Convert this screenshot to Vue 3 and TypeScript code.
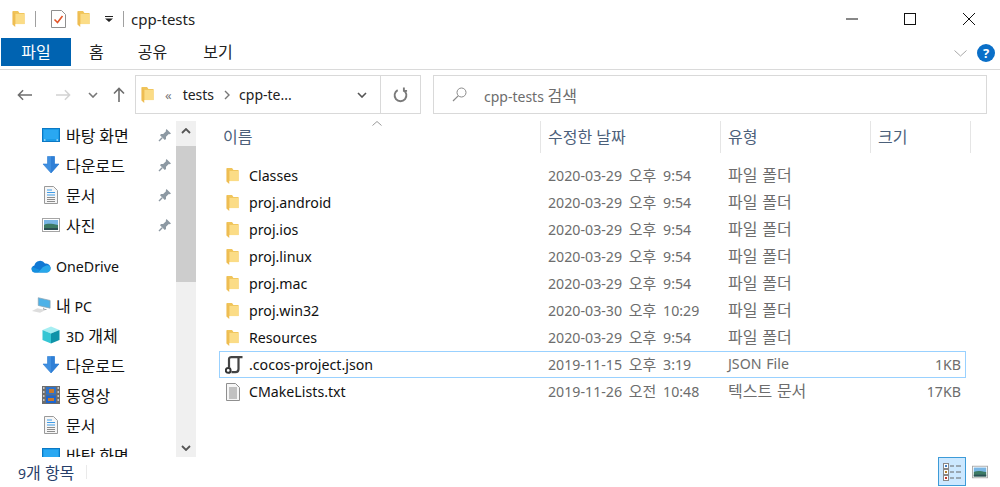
<template>
  <div class="explorer">
    <!-- hidden icon sheet -->
    <svg class="icon-defs" aria-hidden="true">
      <symbol id="i-folder" viewBox="0 0 14 18">
        <path d="M1 0.5h5.5L8 2.5h5.5V14.5H1z" fill="#f0c45a" />
        <path d="M3.5 3.5h10v11h-10z" fill="#fbdc86" />
        <path d="M0.5 0.5 3.5 3.5V17.5L0.5 15z" fill="#eebd52" />
      </symbol>
      <symbol id="i-desktop" viewBox="0 0 18 14">
        <rect x="0.5" y="0.5" width="17" height="13" fill="#1b9ce8" stroke="#0b78c4" />
        <path d="M2 2h14v9H2z" fill="#2aa8f2" />
        <path d="M2 12h1.5M14.5 12H16" stroke="#fff" />
      </symbol>
      <symbol id="i-download" viewBox="0 0 18 18">
        <path d="M5.5 0.5h7v7.5H17L9 17 1 8h4.5z" fill="#3f8fe0" stroke="#2a7bd0" stroke-width="0.6" />
        <path d="M9 0.5h3.5V8H17L9 17z" fill="#2f7fd6" />
      </symbol>
      <symbol id="i-doc" viewBox="0 0 14 18">
        <path d="M0.5 0.5h9l4 4v13H0.5z" fill="#f6f6f6" stroke="#9a9a9a" />
        <path d="M3 4h5M3 6.5h8M3 9h8" stroke="#3f9be6" />
        <path d="M3 11.5h8M3 13.5h8M3 15.5h8" stroke="#8c8c8c" />
      </symbol>
      <symbol id="i-photo" viewBox="0 0 18 14">
        <rect x="0.5" y="0.5" width="17" height="13" fill="#fff" stroke="#a5a5a5" />
        <rect x="2" y="2" width="14" height="5" fill="#79b6e4" />
        <path d="M2 7c4-2 8-1 14 0v5H2z" fill="#3d7a64" />
        <path d="M2 10h14v2H2z" fill="#2c4f54" />
      </symbol>
      <symbol id="i-pin" viewBox="0 0 14 14">
        <path d="M8.5 1 13 5.5 11.8 6.2 10.8 6 8 8.8 8 11 6.8 12 2 7.2 3 6h2.2L8 3.2 7.8 2.2z" fill="#8d99a3" />
        <path d="M4.2 9.8 1 13" stroke="#8d99a3" stroke-width="1.4" />
      </symbol>
      <symbol id="i-cloud" viewBox="0 0 20 14">
        <path d="M4 13.5a3.6 3.6 0 0 1-.6-7.1A5.8 5.8 0 0 1 14 4.6a4.4 4.4 0 0 1 2 8.9z" fill="#0f78d4" />
        <path d="M7 13.5 12 8l4-1.8a3.7 3.7 0 0 1 3.6 3.6c0 2-1.6 3.7-3.6 3.7z" fill="#28a8ea" />
        <path d="M4 13.5a3.6 3.6 0 0 1-2.8-5.6L9 11l-2 2.5z" fill="#1490df" />
      </symbol>
      <symbol id="i-pc" viewBox="0 0 22 18">
        <path d="M8 1 21 4v8.5L8 9.5z" fill="#4db2e8" stroke="#8ba2b2" stroke-width="0.8" />
        <path d="M14 12v2h3" stroke="#9aa6ae" stroke-width="1.2" fill="none" />
        <path d="M1 15.5 7 12.5l9 2-6 3z" fill="#dddddd" />
      </symbol>
      <symbol id="i-cube" viewBox="0 0 18 18">
        <path d="M9 0.5 17.5 4 9 7.5.5 4z" fill="#a6eef2" />
        <path d="M.5 4 9 7.5v10L.5 14z" fill="#35c6d4" />
        <path d="M17.5 4 9 7.5v10l8.5-3.5z" fill="#0f93a8" />
      </symbol>
      <symbol id="i-film" viewBox="0 0 18 18">
        <rect width="18" height="18" fill="#6d6d6d" />
        <path d="M1 2h1.5M1 6h1.5M1 10h1.5M1 14h1.5M15.5 2H17M15.5 6H17M15.5 10H17M15.5 14H17" stroke="#e4e4e4" stroke-width="1.4" />
        <rect x="4" y="1" width="10" height="7.5" fill="#2f72c8" />
        <rect x="4" y="9.5" width="10" height="7.5" fill="#1d66d0" />
        <path d="M7 3h5v4H7zM6 12h6v3H6z" fill="#c8792c" />
      </symbol>
      <symbol id="i-scroll" viewBox="0 0 18 18">
        <path d="M4 11.5V3.2C4 1.6 5 1.1 6.4 1.1H17.5" fill="none" stroke="#444" stroke-width="2.2" />
        <path d="M13.5 1v12c0 2.2-1.2 3.2-3 3.2H6.5" fill="none" stroke="#444" stroke-width="2.2" />
        <circle cx="3.2" cy="14.4" r="2.4" fill="#fff" stroke="#333" stroke-width="2" />
      </symbol>
      <symbol id="i-text" viewBox="0 0 14 18">
        <path d="M0.5 0.5h9l4 4v13H0.5z" fill="#f6f6f6" stroke="#8f8f8f" />
        <path d="M3 5h8M3 7h8M3 9h8M3 11h8M3 13h8M3 15h8" stroke="#8c8c8c" />
      </symbol>
    </svg>

    <div class="titlebar">
      <svg class="ic-folder"><use href="#i-folder" /></svg>
      <span class="qa-sep qa-sep-first"></span>
      <svg class="qa-check" viewBox="0 0 15 18">
        <path d="M0.5 0.5h10l4 4v13H0.5z" fill="#fff" stroke="#8f8f8f" />
        <path d="M3.5 9.5 6.5 12.5 11.5 6" fill="none" stroke="#e2552a" stroke-width="1.6" />
      </svg>
      <svg class="ic-folder qa-folder"><use href="#i-folder" /></svg>
      <svg class="qa-drop" viewBox="0 0 8 6">
        <path d="M0 0h8v1H0zM0 2.5h8L4 6z" fill="#222" />
      </svg>
      <span class="qa-sep"></span>
      <span class="title-text">cpp-tests</span>
      <div class="win-buttons">
        <svg viewBox="0 0 12 12"><path d="M0 6h12" stroke="#111" /></svg>
        <svg viewBox="0 0 12 12"><rect x="0.5" y="0.5" width="11" height="11" fill="none" stroke="#111" /></svg>
        <svg class="win-close" viewBox="0 0 12 12"><path d="M0 0l12 12M12 0 0 12" stroke="#111" /></svg>
      </div>
    </div>

    <div class="tabs">
      <div class="tab tab-file">파일</div>
      <div class="tab tab-home">홈</div>
      <div class="tab tab-share">공유</div>
      <div class="tab tab-view">보기</div>
      <div class="ribbon-right">
        <svg class="ribbon-chevron" viewBox="0 0 13 7"><path d="M0.5 0.5 6.5 6l6-5.5" fill="none" stroke="#a8a8a8" /></svg>
        <span class="help">?</span>
      </div>
    </div>

    <div class="addressbar">
      <div class="nav-buttons">
        <svg class="nav-arrow" viewBox="0 0 16 12"><path d="M16 6H1.5M6.5 1 1.5 6l5 5" fill="none" stroke="#6e6e6e" stroke-width="1.6" /></svg>
        <svg class="nav-arrow nav-forward" viewBox="0 0 16 12"><path d="M0 6h14.5M9.5 1l5 5-5 5" fill="none" stroke="#d2d2d2" stroke-width="1.6" /></svg>
        <svg class="nav-recent" viewBox="0 0 10 6"><path d="M1 1l4 4 4-4" fill="none" stroke="#777" stroke-width="1.6" /></svg>
        <svg class="nav-up" viewBox="0 0 12 15"><path d="M6 15V1.5M1 6.5l5-5 5 5" fill="none" stroke="#6e6e6e" stroke-width="1.6" /></svg>
      </div>
      <div class="address-box">
        <svg class="ic-folder"><use href="#i-folder" /></svg>
        <span class="crumb-more">«</span>
        <span class="crumb">tests</span>
        <svg class="crumb-sep" viewBox="0 0 6 10"><path d="M1 1l4 4-4 4" fill="none" stroke="#777" stroke-width="1.4" /></svg>
        <span class="crumb">cpp-te...</span>
        <svg class="address-chevron" viewBox="0 0 10 6"><path d="M1 1l4 4 4-4" fill="none" stroke="#555" stroke-width="1.6" /></svg>
        <div class="refresh">
          <svg viewBox="0 0 16 16"><path d="M5 2.8a6.3 6.3 0 1 0 6 0M11.6 0v3.6h3.4" fill="none" stroke="#7a7a7a" stroke-width="2" /></svg>
        </div>
      </div>
      <div class="search-box">
        <svg class="search-icon" viewBox="0 0 15 15"><circle cx="9.5" cy="5.5" r="4.5" fill="none" stroke="#8a8a8a" /><path d="M6.2 8.8 1 14" stroke="#8a8a8a" stroke-width="1.2" /></svg>
        <span>cpp-tests <span class="ko">검색</span></span>
      </div>
    </div>

    <div class="main">
      <nav class="sidebar">
        <div class="tree">
          <div
            v-for="item in navItems"
            :key="item.key"
            class="tree-row"
            :class="[`level-${item.level}`, { 'gap-before': item.gap }]"
          >
            <svg class="tree-icon"><use :href="`#i-${item.icon}`" /></svg>
            <span class="tree-label">
              <span v-for="(run, i) in splitRuns(item.label)" :key="i" :class="{ ko: run.ko }">{{ run.text }}</span>
            </span>
            <svg v-if="item.pinned" class="pin"><use href="#i-pin" /></svg>
          </div>
        </div>
        <div class="scrollbar">
          <svg viewBox="0 0 10 6"><path d="M1 5l4-4 4 4" fill="none" stroke="#555" stroke-width="1.8" /></svg>
          <div class="scroll-thumb"></div>
          <svg class="scroll-down" viewBox="0 0 10 6"><path d="M1 1l4 4 4-4" fill="none" stroke="#555" stroke-width="1.8" /></svg>
        </div>
      </nav>

      <section class="content">
        <div class="list-head">
          <div class="col col-name">
            <span class="ko">이름</span>
            <svg class="sort-caret" viewBox="0 0 10 5"><path d="M0.5 4.5 5 0.5l4.5 4" fill="none" stroke="#999" /></svg>
          </div>
          <div class="col col-date"><span class="ko">수정한 날짜</span></div>
          <div class="col col-type"><span class="ko">유형</span></div>
          <div class="col col-size"><span class="ko">크기</span></div>
        </div>
        <div class="list-body">
          <div
            v-for="file in files"
            :key="file.name"
            class="file-row"
            :class="{ selected: file.selected }"
          >
            <div class="cell-name">
              <svg class="file-icon" :class="`file-icon-${file.icon}`"><use :href="`#i-${file.icon}`" /></svg>
              <span>{{ file.name }}</span>
            </div>
            <div class="cell-date">
              <span v-for="(run, i) in splitRuns(file.date)" :key="i" :class="{ ko: run.ko }">{{ run.text }}</span>
            </div>
            <div class="cell-type">
              <span v-for="(run, i) in splitRuns(file.type)" :key="i" :class="{ ko: run.ko }">{{ run.text }}</span>
            </div>
            <div class="cell-size">{{ file.size }}</div>
          </div>
        </div>
      </section>
    </div>

    <footer class="statusbar">
      <span class="status-text">9<span class="ko">개 항목</span></span>
      <span class="status-sep"></span>
      <div class="view-buttons">
        <div class="view-btn active">
          <svg viewBox="0 0 18 18">
            <rect x="0.5" y="0.5" width="5" height="5" fill="#fff" stroke="#888" />
            <rect x="0.5" y="6.5" width="5" height="5" fill="#fff" stroke="#888" />
            <rect x="0.5" y="12.5" width="5" height="5" fill="#fff" stroke="#888" />
            <path d="M2 2h2v2H2z" fill="#3d7fc4" />
            <path d="M2 8h2v2H2z" fill="#b5822c" />
            <path d="M2 14h2v2H2z" fill="#c0392b" />
            <path d="M7 3h4M13 3h5M7 9h4M13 9h5M7 15h4M13 15h5" stroke="#666" />
          </svg>
        </div>
        <div class="view-btn">
          <svg class="view-photo"><use href="#i-photo" /></svg>
        </div>
      </div>
    </footer>
  </div>
</template>

<script setup lang="ts">
interface NavItem {
  key: string
  label: string
  icon: string
  level: number
  pinned?: boolean
  gap?: boolean
}

interface FileItem {
  name: string
  date: string
  type: string
  size: string
  icon: string
  selected?: boolean
}

const navItems: NavItem[] = [
  { key: 'desk', label: '바탕 화면', icon: 'desktop', level: 1, pinned: true },
  { key: 'down', label: '다운로드', icon: 'download', level: 1, pinned: true },
  { key: 'docs', label: '문서', icon: 'doc', level: 1, pinned: true },
  { key: 'pics', label: '사진', icon: 'photo', level: 1, pinned: true },
  { key: 'one', label: 'OneDrive', icon: 'cloud', level: 0, gap: true },
  { key: 'pc', label: '내 PC', icon: 'pc', level: 0, gap: true },
  { key: '3d', label: '3D 개체', icon: 'cube', level: 1 },
  { key: 'down2', label: '다운로드', icon: 'download', level: 1 },
  { key: 'video', label: '동영상', icon: 'film', level: 1 },
  { key: 'docs2', label: '문서', icon: 'doc', level: 1 },
  { key: 'desk2', label: '바탕 화면', icon: 'desktop', level: 1 },
]

const folder = (name: string, date: string): FileItem => ({
  name,
  date,
  type: '파일 폴더',
  size: '',
  icon: 'folder',
})

const files: FileItem[] = [
  folder('Classes', '2020-03-29 오후 9:54'),
  folder('proj.android', '2020-03-29 오후 9:54'),
  folder('proj.ios', '2020-03-29 오후 9:54'),
  folder('proj.linux', '2020-03-29 오후 9:54'),
  folder('proj.mac', '2020-03-29 오후 9:54'),
  folder('proj.win32', '2020-03-30 오후 10:29'),
  folder('Resources', '2020-03-29 오후 9:54'),
  { name: '.cocos-project.json', date: '2019-11-15 오후 3:19', type: 'JSON File', size: '1KB', icon: 'scroll', selected: true },
  { name: 'CMakeLists.txt', date: '2019-11-26 오전 10:48', type: '텍스트 문서', size: '17KB', icon: 'text' },
]

// hangul runs get a bigger size than latin ones
const splitRuns = (text: string) =>
  text
    .split(/([\uac00-\ud7a3]+)/)
    .filter((part) => part !== '')
    .map((part) => ({ text: part, ko: /[\uac00-\ud7a3]/.test(part) }))
</script>

<style>
html,
body {
  margin: 0;
  background: #fff;
}
</style>

<style scoped>
.explorer {
  width: 1000px;
  height: 487px;
  display: flex;
  flex-direction: column;
  overflow: hidden;
  background: #fff;
  font-family: "Noto Sans", "Noto Sans CJK KR", sans-serif;
  font-size: 14.2px;
  color: #111;
}

.ko {
  font-size: 16px;
}

.icon-defs {
  width: 0;
  height: 0;
  position: absolute;
}

.ic-folder {
  width: 13px;
  height: 18px;
  flex: none;
}

.titlebar {
  height: 38px;
  display: flex;
  align-items: center;
  padding-left: 12px;
  flex: none;
}

.qa-sep {
  width: 1px;
  height: 16px;
  background: #a0a0a0;
  margin: 0 7px 0 10px;
}

.qa-sep-first {
  margin: 0 15px 0 10px;
}

.qa-check {
  width: 15px;
  height: 18px;
}

.qa-folder {
  margin-left: 11px;
}

.qa-drop {
  width: 8px;
  height: 6px;
  margin-left: 15px;
}

.title-text {
  font-size: 15px;
  color: #222;
}

.win-buttons {
  margin-left: auto;
  display: flex;
  gap: 46px;
  padding-right: 25px;
}

.win-buttons svg {
  width: 12px;
  height: 12px;
}

.win-buttons .win-close {
  margin-left: 1px;
}

.tabs {
  height: 32px;
  display: flex;
  align-items: flex-start;
  border-bottom: 1px solid #dadada;
  flex: none;
  box-sizing: border-box;
}

.tab {
  height: 28px;
  line-height: 28px;
  font-size: 16px;
  color: #222;
}

.tab-file {
  width: 70px;
  margin-left: 1px;
  background: #0063b1;
  color: #fff;
  text-align: center;
}

.tab-home {
  margin-left: 18px;
}

.tab-share {
  margin-left: 34px;
}

.tab-view {
  margin-left: 36px;
}

.ribbon-right {
  margin-left: auto;
  display: flex;
  align-items: center;
  gap: 10px;
  height: 30px;
  padding-right: 5px;
}

.ribbon-chevron {
  width: 13px;
  height: 7px;
}

.help {
  width: 18px;
  height: 18px;
  border-radius: 50%;
  background: #0a6fc8;
  color: #fff;
  font-size: 13px;
  font-weight: 700;
  line-height: 18px;
  text-align: center;
}

.addressbar {
  height: 51px;
  display: flex;
  align-items: flex-start;
  padding-top: 5px;
  box-sizing: border-box;
  flex: none;
}

.nav-buttons {
  width: 135px;
  height: 39px;
  display: flex;
  align-items: center;
  padding-left: 17px;
  box-sizing: border-box;
  flex: none;
}

.nav-arrow {
  width: 15px;
  height: 12px;
}

.nav-forward {
  margin-left: 24px;
}

.nav-recent {
  width: 10px;
  height: 6px;
  margin-left: 17px;
}

.nav-up {
  width: 12px;
  height: 15px;
  margin-left: 15px;
}

.address-box,
.search-box {
  height: 39px;
  border: 1px solid #d9d9d9;
  box-sizing: border-box;
  display: flex;
  align-items: center;
}

.address-box {
  width: 286px;
  padding-left: 5px;
  flex: none;
}

.crumb-more {
  margin: 0 11px 0 11px;
  color: #777;
  font-size: 13px;
}

.crumb {
  font-size: 14px;
  color: #222;
}

.crumb-sep {
  width: 6px;
  height: 10px;
  margin: 0 9px 0 10px;
}

.address-chevron {
  width: 10px;
  height: 6px;
  margin-left: auto;
  margin-right: 13px;
}

.refresh {
  width: 39px;
  height: 100%;
  border-left: 1px solid #d9d9d9;
  display: flex;
  align-items: center;
  justify-content: center;
}

.refresh svg {
  width: 15px;
  height: 16px;
}

.search-box {
  width: 554px;
  margin-left: 12px;
  padding-left: 18px;
  color: #6d6d6d;
  font-size: 14px;
}

.search-icon {
  width: 15px;
  height: 15px;
  margin-right: 17px;
}

.main {
  flex: 1;
  min-height: 0;
  display: flex;
}

.sidebar {
  width: 196px;
  flex: none;
  display: flex;
  overflow: hidden;
}

.tree {
  width: 176px;
  flex: none;
  margin-top: -1px;
}

.tree-row {
  height: 30px;
  display: flex;
  align-items: center;
  box-sizing: border-box;
  font-size: 14.2px;
}

.level-1 {
  padding-left: 42px;
}

.level-0 {
  padding-left: 31px;
}

.gap-before {
  margin-top: 11px;
}

.level-0 + .level-0 {
  margin-top: 9px;
}

.tree-icon {
  width: 18px;
  height: 18px;
  flex: none;
  margin-right: 6px;
}

.level-0 .tree-icon {
  width: 20px;
  margin-right: 5px;
}

.tree-label {
  white-space: nowrap;
}

.pin {
  width: 14px;
  height: 14px;
  margin-left: auto;
  margin-right: 4px;
}

.scrollbar {
  width: 20px;
  background: #f0f0f0;
  display: flex;
  flex-direction: column;
  align-items: center;
}

.scrollbar > svg {
  width: 10px;
  height: 6px;
  margin: 7px 0;
  flex: none;
}

.scroll-thumb {
  width: 100%;
  height: 136px;
  margin-top: 5px;
  background: #cdcdcd;
  flex: none;
}

.scrollbar .scroll-down {
  margin-top: auto;
  margin-bottom: 6px;
}

.content {
  flex: 1;
  min-width: 0;
}

.list-head {
  height: 32px;
  display: flex;
  color: #4c607a;
  font-size: 14px;
  padding-left: 23px;
}

.col {
  height: 32px;
  line-height: 32px;
  border-right: 1px solid #e5e5e5;
  box-sizing: border-box;
  padding-left: 7px;
  position: relative;
}

.col-name {
  width: 322px;
  padding-left: 4px;
}

.col-date {
  width: 180px;
}

.col-type {
  width: 150px;
}

.col-size {
  width: 100px;
}

.sort-caret {
  position: absolute;
  top: 0;
  left: 153px;
  width: 10px;
  height: 5px;
}

.list-body {
  padding: 9px 0 0 23px;
}

.file-row {
  width: 747px;
  height: 27px;
  display: flex;
  align-items: center;
  box-sizing: border-box;
  border: 1px solid transparent;
  font-size: 14.2px;
  color: #6d6d6d;
}

.file-row.selected {
  border-color: #99d1ff;
}

.cell-name {
  width: 328px;
  display: flex;
  align-items: center;
  color: #111;
  padding-left: 6px;
  box-sizing: border-box;
}

.file-icon {
  width: 13px;
  height: 18px;
  margin-right: 10px;
  flex: none;
}

.file-icon-scroll {
  width: 18px;
  margin-left: -1px;
  margin-right: 6px;
}

.file-icon-text {
  width: 14px;
  margin-right: 9px;
}

.cell-date {
  width: 180px;
  word-spacing: 3px;
  padding-bottom: 3px;
}

.cell-date .ko {
  font-size: 15px;
}

.cell-type {
  width: 150px;
  word-spacing: 1px;
  padding-bottom: 3px;
}

.cell-size {
  width: 83px;
  text-align: right;
}

.statusbar {
  height: 30px;
  flex: none;
  display: flex;
  align-items: center;
  padding-left: 18px;
  font-size: 14px;
  color: #27406a;
}

.status-sep {
  width: 1px;
  height: 14px;
  background: #eaeaea;
  margin-left: 12px;
}

.view-buttons {
  margin-left: auto;
  align-self: flex-start;
  display: flex;
  gap: 5px;
  padding-right: 11px;
}

.view-btn {
  width: 28px;
  height: 29px;
  box-sizing: border-box;
  display: flex;
  align-items: center;
  justify-content: center;
  border: 1px solid transparent;
}

.view-btn svg {
  width: 18px;
  height: 18px;
}

.view-btn.active {
  background: #cce8ff;
  border-color: #3d9bd8;
}

.view-btn + .view-btn {
  width: 18px;
}

.view-btn .view-photo {
  width: 18px;
  height: 14px;
}
</style>
